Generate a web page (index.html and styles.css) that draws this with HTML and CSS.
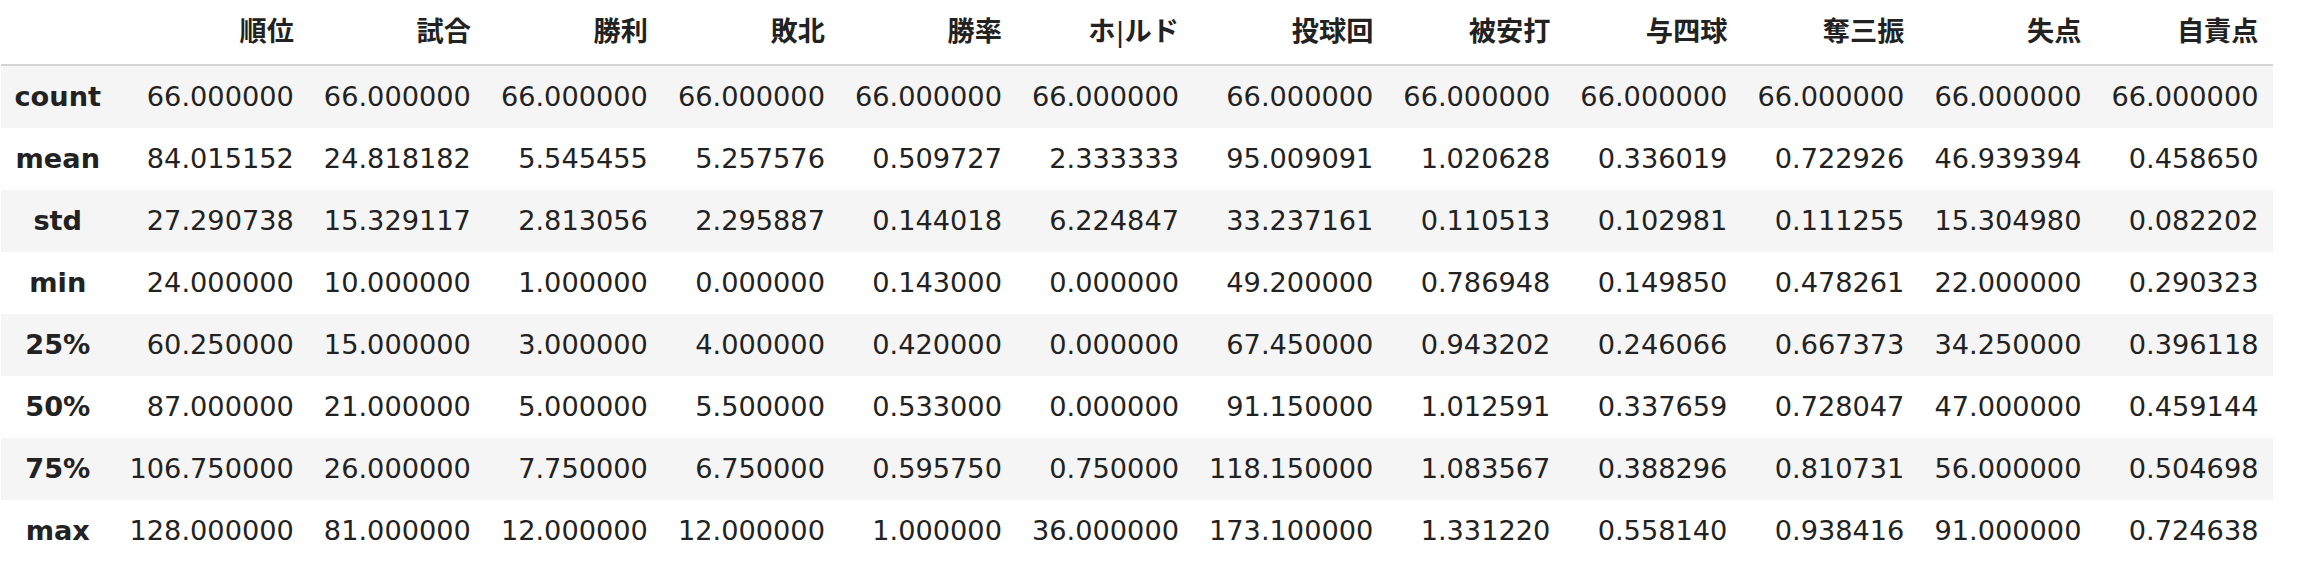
FILE: index.html
```html
<!DOCTYPE html>
<html lang="ja">
<head>
<meta charset="utf-8">
<link rel="stylesheet" href="styles.css">
</head>
<body>
<table class="dataframe">
<thead>
<tr><th></th><th>順位</th><th>試合</th><th>勝利</th><th>敗北</th><th>勝率</th><th>ホ<span class="bar">|</span>ルド</th><th>投球回</th><th>被安打</th><th>与四球</th><th>奪三振</th><th>失点</th><th>自責点</th></tr>
</thead>
<tbody>
<tr><th>count</th><td>66.000000</td><td>66.000000</td><td>66.000000</td><td>66.000000</td><td>66.000000</td><td>66.000000</td><td>66.000000</td><td>66.000000</td><td>66.000000</td><td>66.000000</td><td>66.000000</td><td>66.000000</td></tr>
<tr><th>mean</th><td>84.015152</td><td>24.818182</td><td>5.545455</td><td>5.257576</td><td>0.509727</td><td>2.333333</td><td>95.009091</td><td>1.020628</td><td>0.336019</td><td>0.722926</td><td>46.939394</td><td>0.458650</td></tr>
<tr><th>std</th><td>27.290738</td><td>15.329117</td><td>2.813056</td><td>2.295887</td><td>0.144018</td><td>6.224847</td><td>33.237161</td><td>0.110513</td><td>0.102981</td><td>0.111255</td><td>15.304980</td><td>0.082202</td></tr>
<tr><th>min</th><td>24.000000</td><td>10.000000</td><td>1.000000</td><td>0.000000</td><td>0.143000</td><td>0.000000</td><td>49.200000</td><td>0.786948</td><td>0.149850</td><td>0.478261</td><td>22.000000</td><td>0.290323</td></tr>
<tr><th>25%</th><td>60.250000</td><td>15.000000</td><td>3.000000</td><td>4.000000</td><td>0.420000</td><td>0.000000</td><td>67.450000</td><td>0.943202</td><td>0.246066</td><td>0.667373</td><td>34.250000</td><td>0.396118</td></tr>
<tr><th>50%</th><td>87.000000</td><td>21.000000</td><td>5.000000</td><td>5.500000</td><td>0.533000</td><td>0.000000</td><td>91.150000</td><td>1.012591</td><td>0.337659</td><td>0.728047</td><td>47.000000</td><td>0.459144</td></tr>
<tr><th>75%</th><td>106.750000</td><td>26.000000</td><td>7.750000</td><td>6.750000</td><td>0.595750</td><td>0.750000</td><td>118.150000</td><td>1.083567</td><td>0.388296</td><td>0.810731</td><td>56.000000</td><td>0.504698</td></tr>
<tr><th>max</th><td>128.000000</td><td>81.000000</td><td>12.000000</td><td>12.000000</td><td>1.000000</td><td>36.000000</td><td>173.100000</td><td>1.331220</td><td>0.558140</td><td>0.938416</td><td>91.000000</td><td>0.724638</td></tr>
</tbody>
</table>
</body>
</html>
```
FILE: styles.css
```css
html, body {
  margin: 0;
  padding: 0;
  background: #ffffff;
}
body {
  padding-left: 1px;
}
.dataframe {
  border-collapse: collapse;
  border-spacing: 0;
  font-family: "DejaVu Sans", "Noto Sans CJK JP", sans-serif;
  font-size: 27.2px;
  color: #222222;
}
.dataframe th,
.dataframe td {
  padding: 15px 15px;
  line-height: 32px;
  text-align: right;
  white-space: nowrap;
  vertical-align: middle;
}
.dataframe th {
  font-weight: bold;
}
.dataframe thead th {
  padding-top: 16px;
  padding-bottom: 16px;
  border-bottom: 2px solid #d4d4d4;
}
.dataframe thead th .bar {
  font-weight: normal;
}
.dataframe tbody th {
  text-align: center;
  padding-left: 13.5px;
  padding-right: 13.5px;
}
.dataframe tbody tr:nth-child(odd) {
  background: #f5f5f5;
}
```
